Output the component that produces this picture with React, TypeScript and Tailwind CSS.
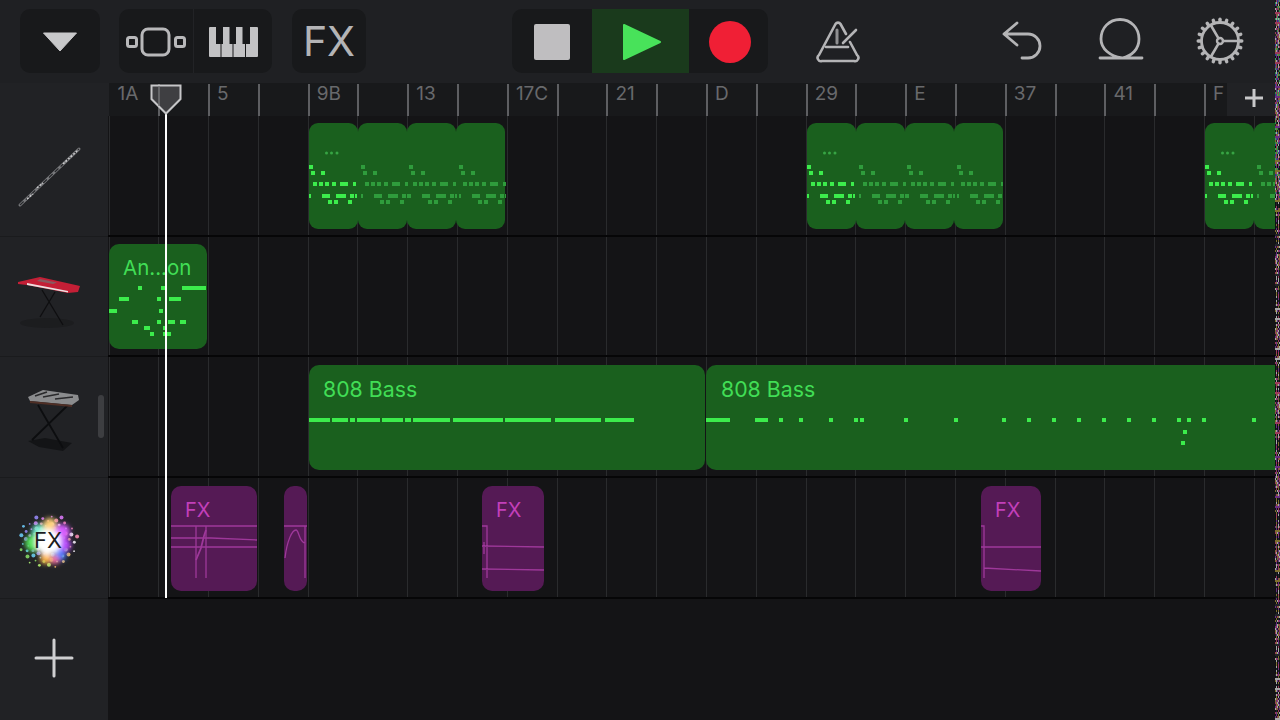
import React from 'react'

const labels: Record<number, string> = {
  2: '5', 4: '9B', 6: '13', 8: '17C', 10: '21', 12: 'D', 14: '29', 16: 'E', 18: '37', 20: '41', 22: 'F',
}

type Note = [number, number, number]

// one bar of the flute pattern, x / y / width relative to the segment
const flutePattern: Note[] = [
  [0, 42, 4], [2, 48, 4], [12, 48, 4],
  [4, 59, 4], [10, 59, 4], [16, 59, 4], [23, 59, 4], [31, 59, 8], [44, 59, 3],
  [0, 71, 2], [13, 71, 8], [27, 71, 10], [41, 71, 4], [46, 71, 2],
  [19, 77, 4], [25, 77, 4], [39, 77, 4],
]
const fluteOffsets = [0, 52, 100, 150]

const antonNotes: Note[] = [
  [29, 42, 4], [52, 42, 4], [73, 42, 24],
  [10, 53, 10], [48, 53, 4], [60, 53, 12],
  [0, 65, 8], [50, 65, 4],
  [23, 76, 6], [48, 76, 4], [59, 76, 7], [71, 76, 6],
  [35, 82, 6], [54, 82, 4],
  [41, 88, 4], [54, 88, 8],
]

const bassOne = [
  [0, 21], [23, 16], [41, 5], [48, 23], [73, 21], [96, 6], [104, 37], [144, 50], [196, 46], [246, 46], [296, 29],
]
const bassTwoX = [73, 93, 123, 148, 154, 198, 248, 296, 321, 346, 371, 396, 421, 446, 471, 481, 496, 546]

function FluteRegion({ left, width }: { left: number; width: number }) {
  return (
    <div className="absolute top-[7px] h-[106px] overflow-hidden" style={{ left, width }}>
      <div className="absolute inset-0 flex">
        {[0, 1, 2, 3].map((i) => (
          <div key={i} className="h-full w-[49px] shrink-0 rounded-[9px] bg-[#1a601e]" />
        ))}
      </div>
      <svg className="absolute left-0 top-0" width="197" height="106">
        {fluteOffsets.map((off, i) => (
          <g key={i} fill={i === 0 ? '#3cec4c' : '#2f9c3c'}>
            {flutePattern.map(([x, y, w], j) => (
              <rect key={j} x={x + off} y={y} width={w} height="4" />
            ))}
          </g>
        ))}
        <g fill="#37a444">
          <circle cx="17.5" cy="30" r="1.5" />
          <circle cx="22.5" cy="30" r="1.5" />
          <circle cx="28" cy="30" r="1.5" />
        </g>
      </svg>
    </div>
  )
}

function FxRegion({ left, width, label, children }: { left: number; width: number; label: boolean; children: React.ReactNode }) {
  return (
    <div className="absolute top-[8px] h-[105px] overflow-hidden rounded-[10px] bg-[#551a55]" style={{ left, width }}>
      {label && <span className="absolute left-[14px] top-[12px] text-[20px] leading-6 text-[#c23fb9]">FX</span>}
      <svg className="absolute left-0 top-0" width={width} height="105" fill="none" stroke="#9e389a" strokeWidth="1.3">
        {children}
      </svg>
    </div>
  )
}

function Gear() {
  const teeth = Array.from({ length: 20 }, (_, i) => i * 18)
  return (
    <svg width="48" height="48" viewBox="0 0 48 48" fill="none" stroke="#b4b4b6" strokeLinecap="round">
      <circle cx="24" cy="24" r="18.5" strokeWidth="2.8" />
      {teeth.map((a) => (
        <line key={a} x1="24" y1="4.5" x2="24" y2="2.2" strokeWidth="3.4" transform={`rotate(${a} 24 24)`} />
      ))}
      <circle cx="24" cy="24" r="3" strokeWidth="2.4" />
      <path d="M27 24H42M22.5 21.4L15 8.5M22.5 26.6L15 39.5" strokeWidth="2.6" />
    </svg>
  )
}

function Flute() {
  return (
    <svg width="70" height="68" viewBox="0 0 70 68">
      <line x1="5" y1="63" x2="64" y2="7" stroke="#77787b" strokeWidth="3" strokeLinecap="round" />
      <line x1="5" y1="63" x2="64" y2="7" stroke="#26272a" strokeWidth="1.2" strokeDasharray="5 3" />
      <path d="M48 22L62 9M12 57l6-5M22 46l6-5" stroke="#c9c9cb" strokeWidth="1.6" strokeDasharray="2 1.5" />
    </svg>
  )
}

function RedKeys() {
  return (
    <svg width="70" height="68" viewBox="0 0 70 68">
      <ellipse cx="32" cy="60" rx="27" ry="5" fill="#1c1d1f" />
      <path d="M27 27L48 62M40 29L25 54" stroke="#0e0e10" strokeWidth="1.3" />
      <path d="M3 19L25 14L65 23L63 29L53 30L12 22L3 21Z" fill="#c41f36" />
      <path d="M12 20L53 28V29.5L12 22Z" fill="#ecdfe0" />
      <path d="M25 16L42 19.5L38 21L22 18Z" fill="#8a5a60" />
    </svg>
  )
}

function Synth() {
  return (
    <svg width="70" height="68" viewBox="0 0 70 68">
      <path d="M13 58L30 55L57 60L48 68L24 64Z" fill="#131416" />
      <path d="M23 22L48 65M53 22L17 57" stroke="#0c0d0f" strokeWidth="1.8" />
      <path d="M13 14L28 7L63 12L64 17L57 22L15 18Z" fill="#8b8c8e" />
      <path d="M20 13L32 9M28 14L44 11M40 16L58 14" stroke="#2a2a2c" strokeWidth="1.6" />
      <path d="M15 18L57 22V24L15 20Z" fill="#4f2f26" />
    </svg>
  )
}

const glow = [
  ['#52e05a', 19, 35, 9], ['#6cf0d0', 24, 23, 7], ['#ffd27a', 35, 17, 7], ['#d65cff', 47, 24, 8],
  ['#b94bff', 49, 37, 7], ['#4f7dff', 45, 47, 6], ['#ffb84d', 31, 50, 6], ['#ff6fa8', 40, 52, 4],
] as const

const sparkColors = ['#8be36a', '#e07cff', '#ffd06a', '#6fd0ff', '#ff8fb8', '#b7ff7a', '#9c8cff', '#ffffff']

// scatter of small sparks, laid out on a sunflower spiral
const sparks = Array.from({ length: 70 }, (_, i) => {
  const r = 13 + (i / 70) * 17
  const a = i * 2.39996
  return { x: 33 + Math.cos(a) * r, y: 33 + Math.sin(a) * r * 0.92, r: 0.9 + (i % 3) * 0.55, c: sparkColors[i % sparkColors.length] }
})

function FxBurst() {
  return (
    <div className="relative mt-[5px] h-[66px] w-[66px]">
      <svg className="absolute inset-0" width="66" height="66">
        <defs>
          <filter id="soft" x="-30%" y="-30%" width="160%" height="160%">
            <feGaussianBlur stdDeviation="2.4" />
          </filter>
        </defs>
        <g opacity="0.85">
          {sparks.map((s, i) => (
            <circle key={i} cx={s.x} cy={s.y} r={s.r} fill={s.c} />
          ))}
        </g>
        <g filter="url(#soft)">
          {glow.map(([c, x, y, r], i) => (
            <circle key={i} cx={x} cy={y} r={r} fill={c} />
          ))}
          <circle cx="33" cy="34" r="13" fill="#ffffff" />
        </g>
      </svg>
      <span className="absolute inset-0 flex items-center justify-center text-[22px] font-normal text-[#1c1c1e]">FX</span>
    </div>
  )
}

// the video glitch running down the right edge
const noiseColors = ['#17181b', '#6a2f82', '#2f8f50', '#a8a8a8', '#28408f', '#7f6f2f', '#0e0f12', '#9c3a5a', '#3f9c6a', '#22242a']
function NoiseStrip() {
  const cells: React.ReactNode[] = []
  for (let y = 0; y < 720; y += 2) {
    for (let x = 0; x < 5; x += 1) {
      const h = (y * 31 + x * 17 + ((y * y) % 37) * (x + 5)) % noiseColors.length
      cells.push(<rect key={`${x}-${y}`} x={x} y={y} width="1" height="2" fill={noiseColors[y > 200 && h % 2 === 0 ? 6 : h]} />)
    }
  }
  return (
    <svg className="absolute right-0 top-0" width="5" height="720">
      {cells}
    </svg>
  )
}

const lanes = [
  { icon: <Flute />, h: 'h-[121px]' },
  { icon: <RedKeys />, h: 'h-[120px]' },
  { icon: <Synth />, h: 'h-[121px]' },
  { icon: <FxBurst />, h: 'h-[121px]' },
]

export default function App() {
  return (
    <div className="relative flex h-[720px] w-[1280px] flex-col overflow-hidden bg-[#141416] font-['Inter',sans-serif]">
      {/* Toolbar */}
      <div className="flex h-[83px] shrink-0 items-center bg-[#1f2023] pb-[1px]">
        <button className="ml-[20px] flex h-[64px] w-[80px] items-center justify-center rounded-[10px] bg-[#18191b] pt-[2px]">
          <svg width="36" height="20" viewBox="0 0 36 20">
            <path d="M1.5 1H34.5L18 19Z" fill="#c8c8ca" stroke="#c8c8ca" strokeLinejoin="round" />
          </svg>
        </button>
        <div className="ml-[19px] flex h-[64px] w-[153px] overflow-hidden rounded-[10px] bg-[#18191b]">
          <div className="flex w-[75px] items-center justify-center border-r border-[#222326] pt-[2px]">
            <svg width="60" height="30" viewBox="0 0 60 30" fill="none" stroke="#b8b8ba" strokeWidth="3">
              <rect x="1.5" y="10.5" width="9" height="9" rx="2" />
              <rect x="16" y="2" width="27" height="26" rx="6" />
              <rect x="49.5" y="10.5" width="9" height="9" rx="2" />
            </svg>
          </div>
          <div className="flex flex-1 items-center justify-center pt-[2px]">
            <svg width="49" height="32" viewBox="0 0 49 32" fill="#c2c2c4">
              <path d="M0 2a1 1 0 0 1 1-1h6v17h4.5v13H1a1 1 0 0 1-1-1Z" />
              <path d="M14 1h6.5v17h3v13h-11V18H14Z" />
              <path d="M27 1h6.5v17H36v13H24.5V18H27Z" />
              <path d="M41 1h7a1 1 0 0 1 1 1v28a1 1 0 0 1-1 1H37V18h4Z" />
            </svg>
          </div>
        </div>
        <div className="ml-[20px] flex h-[64px] w-[74px] items-center justify-center rounded-[10px] bg-[#18191b] pt-[2px] text-[41px] font-normal text-[#b4b4b6]">
          FX
        </div>
        <div className="ml-[146px] flex h-[64px] w-[256px] overflow-hidden rounded-[10px] bg-[#18191b]">
          <div className="flex w-[80px] items-center justify-center pt-[2px]">
            <div className="h-[36px] w-[36px] rounded-[2px] bg-[#bfbec0]" />
          </div>
          <div className="flex w-[97px] items-center justify-center bg-[#1a3a1c] pl-[3px] pt-[1px]">
            <svg width="40" height="40" viewBox="0 0 40 40">
              <path d="M2 3L38 20L2 37Z" fill="#48e25a" stroke="#48e25a" strokeWidth="2" strokeLinejoin="round" />
            </svg>
          </div>
          <div className="flex flex-1 items-center justify-center pl-[2px] pt-[1px]">
            <div className="h-[42px] w-[42px] rounded-full bg-[#f01f35]" />
          </div>
        </div>
        <div className="ml-[48px] mt-[2px]">
          <svg width="44" height="44" viewBox="0 0 44 44" fill="none" stroke="#b4b4b6" strokeWidth="2.6" strokeLinejoin="round" strokeLinecap="round">
            <path d="M24.5 4L30 14M34 22L41 35a3.4 3.4 0 0 1-3 6H6a3.4 3.4 0 0 1-3-6L19.5 4a3 3 0 0 1 5 0" />
            <path d="M10 27H32" />
            <path d="M27 23L40 10" />
            <path d="M21 10V23" strokeWidth="3" stroke="#8f8f91" />
          </svg>
        </div>
        <div className="ml-[142px]">
          <svg width="44" height="40" viewBox="0 0 44 40" fill="none" stroke="#b4b4b6" strokeWidth="2.8" strokeLinecap="round" strokeLinejoin="round">
            <path d="M15 2L2 13L15 24M2 13H26a12 12 0 0 1 0 24H20" />
          </svg>
        </div>
        <div className="ml-[52px] mb-[3px]">
          <svg width="46" height="44" viewBox="0 0 46 44" fill="none" stroke="#b4b4b6" strokeWidth="2.8" strokeLinecap="round">
            <path d="M2 40H24C12 38 3 31 3 21C3 10 11 1.5 22 1.5S41 10 41 21C41 31 34 38 24 40H44" />
          </svg>
        </div>
        <div className="ml-[52px]">
          <Gear />
        </div>
      </div>

      {/* Ruler */}
      <div className="flex h-[33px] shrink-0 bg-[#212225]">
        <div className="h-full w-[1227px] shrink-0 pl-[108.5px]">
          <div className="flex h-full overflow-hidden bg-[#18191b]">
            {Array.from({ length: 23 }, (_, i) => (
              <div key={i} className="relative h-full w-[49.8px] shrink-0">
                {i > 0 && <div className="absolute bottom-0 left-0 top-[1px] w-[2px] bg-[#5e5f62]" />}
                {(labels[i] || i === 0) && (
                  <span className="absolute left-[9px] top-0 whitespace-nowrap text-[19px] leading-[21px] text-[#68696c]">
                    {i === 0 ? '1A' : labels[i]}
                  </span>
                )}
              </div>
            ))}
          </div>
        </div>
        <div className="flex flex-1 items-center justify-center pb-[3px]">
          <svg width="20" height="20" viewBox="0 0 20 20" stroke="#c8c8ca" strokeWidth="3">
            <path d="M10 1V19M1 10H19" />
          </svg>
        </div>
      </div>

      {/* Tracks */}
      <div className="flex flex-col">
        {lanes.map((lane, idx) => (
          <div key={idx} className={`flex ${lane.h} shrink-0`}>
            <div className="flex w-[108px] shrink-0 items-center border-b border-[#1a1b1d] bg-[#212225] pl-[15px]">
              {lane.icon}
            </div>
            <div className="relative flex-1 overflow-hidden border-b-2 border-[#060607] bg-[#141416]">
              <div className="absolute inset-0 flex pl-[0.5px]">
                {Array.from({ length: 24 }, (_, i) => (
                  <div key={i} className="h-full w-[49.8px] shrink-0 border-l border-[#2a2b2d]" />
                ))}
              </div>

              {idx === 0 && (
                <>
                  <FluteRegion left={201} width={197} />
                  <FluteRegion left={699} width={196} />
                  <FluteRegion left={1097} width={197} />
                </>
              )}

              {idx === 1 && (
                <div className="absolute left-[1px] top-[7px] h-[105px] w-[98px] overflow-hidden rounded-[10px] bg-[#1a601e]">
                  <span className="absolute left-[14px] top-[12px] text-[20.5px] leading-6 text-[#41dd55]">An...on</span>
                  <svg className="absolute inset-0" width="98" height="105" fill="#3cec4c">
                    {antonNotes.map(([x, y, w], i) => (
                      <rect key={i} x={x} y={y} width={w} height="4" />
                    ))}
                  </svg>
                </div>
              )}

              {idx === 2 && (
                <>
                  <div className="absolute left-[201px] top-[8px] h-[105px] w-[396px] overflow-hidden rounded-[10px] bg-[#1a601e]">
                    <span className="absolute left-[14px] top-[12px] text-[21.3px] leading-6 text-[#41dd55]">808 Bass</span>
                    <svg className="absolute inset-0" width="396" height="105" fill="#3cec4c">
                      {bassOne.map(([x, w], i) => (
                        <rect key={i} x={x} y="53" width={w} height="4" />
                      ))}
                    </svg>
                  </div>
                  <div className="absolute left-[598px] top-[8px] h-[105px] w-[600px] overflow-hidden rounded-[10px] bg-[#1a601e]">
                    <span className="absolute left-[15px] top-[12px] text-[21.3px] leading-6 text-[#41dd55]">808 Bass</span>
                    <svg className="absolute inset-0" width="600" height="105" fill="#3cec4c">
                      <rect x="0" y="53" width="24" height="4" />
                      <rect x="49" y="53" width="13" height="4" />
                      {bassTwoX.map((x) => (
                        <rect key={x} x={x} y="53" width="4" height="4" />
                      ))}
                      <rect x="477" y="65" width="4" height="4" />
                      <rect x="475" y="76" width="4" height="4" />
                    </svg>
                  </div>
                </>
              )}

              {idx === 3 && (
                <>
                  <FxRegion left={63} width={86} label>
                    <path d="M0 40H86M0 52L40 52L86 54M0 61H86M25 40V92M35 40V92" />
                    <path d="M25 74L30 62L33 50L35 44" strokeWidth="1.8" />
                  </FxRegion>
                  <FxRegion left={176} width={23} label={false}>
                    <path d="M0 40H23M1 72C3 55 8 44 12 44C15 44 15 56 21 57M21 40V92" />
                  </FxRegion>
                  <FxRegion left={374} width={62} label>
                    <path d="M0 40H5V92M0 60L62 61M0 83L62 84M2 56V68" />
                  </FxRegion>
                  <FxRegion left={873} width={60} label>
                    <path d="M0 40H3V92M0 61L60 61M3 82L60 85" />
                  </FxRegion>
                </>
              )}
            </div>
          </div>
        ))}
      </div>

      {/* Add track */}
      <div className="flex flex-1">
        <div className="flex w-[108px] items-center justify-center bg-[#212225] pb-[4px]">
          <svg width="40" height="40" viewBox="0 0 40 40" stroke="#cfcfd1" strokeWidth="3" strokeLinecap="round">
            <path d="M20 2V38M2 20H38" />
          </svg>
        </div>
        <div className="flex-1 bg-[#141416]" />
      </div>

      {/* Overlays: track list scroller, playhead, glitch */}
      <div className="absolute left-[98px] top-[395px] h-[43px] w-[6px] rounded-full bg-[#3d3e41]" />
      <div className="absolute left-[165px] top-[113px] h-[485px] w-[2px] bg-white" />
      <svg className="absolute left-[150px] top-[84px]" width="32" height="31" viewBox="0 0 32 31">
        <path d="M1.5 1.5H30.5V15L16 29.5L1.5 15Z" fill="#3f3f42" stroke="#c6c6c8" strokeWidth="2" />
        <path d="M9 2V22" stroke="#77787a" strokeWidth="1.4" />
      </svg>
      <NoiseStrip />
    </div>
  )
}
